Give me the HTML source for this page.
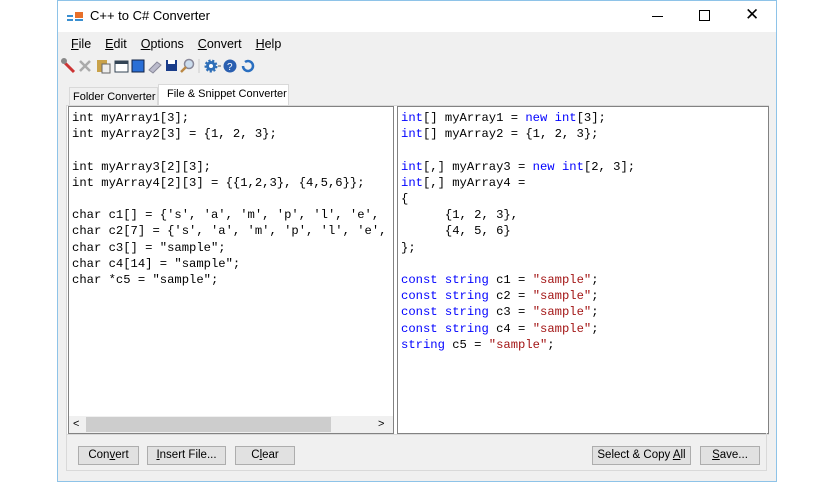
<!DOCTYPE html>
<html><head><style>
body{margin:0;width:836px;height:484px;background:#fff;position:relative;overflow:hidden;font-family:"Liberation Sans",sans-serif;}
.win{position:absolute;left:57px;top:0;width:720px;height:482px;background:#f0f0f0;border:1px solid #8ec3e8;box-sizing:border-box;}
.title{position:absolute;left:0;top:0;width:100%;height:31px;background:#fff;}
.title span{position:absolute;left:32px;top:7px;font-size:13px;color:#000;}
.menu{position:absolute;left:13px;top:36px;font-size:12.5px;}
.menu span{margin-right:14px;}
.pane{position:absolute;top:105px;background:#fff;border:1px solid #828282;box-sizing:border-box;font-family:"Liberation Mono",monospace;font-size:12.2px;line-height:16.2px;white-space:pre;padding:3px 0 0 3px;overflow:hidden;}
.k{color:#0000ff}.s{color:#a31515}
.btn{position:absolute;top:445px;height:19px;background:#e1e1e1;border:1px solid #adadad;box-sizing:border-box;font-size:11.5px;text-align:center;line-height:17px;white-space:nowrap;}
.tab{position:absolute;font-size:11px;box-sizing:border-box;white-space:nowrap;}
</style></head><body>
<div class="win">
<div class="title">
<svg style="position:absolute;left:9px;top:11px" width="16" height="10"><rect x="0" y="3" width="6" height="2" fill="#3a8fd0"/><rect x="0" y="7" width="6" height="2" fill="#3a8fd0"/><rect x="8" y="0" width="8" height="6" fill="#e8702a"/><rect x="8" y="7" width="8" height="2" fill="#3a8fd0"/></svg>
<span>C++ to C# Converter</span>
<div style="position:absolute;left:594px;top:15px;width:11px;height:1px;background:#000"></div>
<div style="position:absolute;left:641px;top:9px;width:9px;height:9px;border:1px solid #000"></div>
<div style="position:absolute;left:687px;top:4px;font-size:17px">✕</div>
</div>
<div class="menu"><span><u>F</u>ile</span><span><u>E</u>dit</span><span><u>O</u>ptions</span><span><u>C</u>onvert</span><span><u>H</u>elp</span></div>
<svg style="position:absolute;left:2px;top:56px" width="230" height="18">
<path d="M2 3 l6 6 l6 6" stroke="#c33" stroke-width="3"/><circle cx="4" cy="4" r="3" fill="#888"/>
<path d="M20 4 l10 10 M30 4 l-10 10" stroke="#aaa" stroke-width="2.5"/>
<rect x="37" y="3" width="10" height="12" fill="#c9a24a"/><rect x="42" y="7" width="8" height="9" fill="#eee" stroke="#666"/>
<rect x="55" y="4" width="13" height="11" fill="#fff" stroke="#345"/><rect x="55" y="4" width="13" height="3" fill="#345"/>
<rect x="72" y="3" width="12" height="12" fill="#2a6fd6" stroke="#124"/>
<path d="M89 13 l8 -8 l4 3 l-8 8 z" fill="#bbc" stroke="#889"/>
<rect x="106" y="3" width="11" height="11" fill="#1a3d8a"/><rect x="108" y="3" width="7" height="4" fill="#fff"/>
<circle cx="129" cy="7" r="4.5" fill="#cde" stroke="#889" stroke-width="1.5"/><path d="M126 10 l-5 5" stroke="#b84" stroke-width="2.5"/>
<line x1="139" y1="2" x2="139" y2="16" stroke="#ccc"/>
<circle cx="151" cy="9" r="5" fill="#2f6fb8" stroke="#2f6fb8" stroke-width="3" stroke-dasharray="2 1.5"/><circle cx="151" cy="9" r="2" fill="#fff"/><path d="M158 9 h3" stroke="#555"/>
<circle cx="170" cy="9" r="6.5" fill="#2a5fb0"/><text x="167" y="13" font-size="10" fill="#fff" font-family="Liberation Sans">?</text>
<path d="M185 5 a5 5 0 1 1 -2 4" stroke="#2a6fc0" stroke-width="2.5" fill="none"/>
</svg>
<div class="tab" style="left:11px;top:86px;width:89px;height:18px;border:1px solid #d9d9d9;border-bottom:none;padding:3px 0 0 3px">Folder Converter</div>
<div class="tab" style="left:100px;top:83px;width:131px;height:22px;background:#fff;border:1px solid #d9d9d9;border-bottom:none;padding:3px 0 0 8px">File &amp; Snippet Converter</div>
<div style="position:absolute;left:8px;top:104px;width:701px;height:328px;border:1px solid #d9d9d9;background:#fff"></div>
<div class="pane" style="left:10px;width:326px;height:328px;">int myArray1[3];
int myArray2[3] = {1, 2, 3};

int myArray3[2][3];
int myArray4[2][3] = {{1,2,3}, {4,5,6}};

char c1[] = {'s', 'a', 'm', 'p', 'l', 'e',
char c2[7] = {'s', 'a', 'm', 'p', 'l', 'e',
char c3[] = "sample";
char c4[14] = "sample";
char *c5 = "sample";
<div style="position:absolute;left:0;bottom:0;width:324px;height:17px;background:#f0f0f0;font-family:'Liberation Sans';font-size:11px;"><span style="position:absolute;left:4px;top:0">&lt;</span><div style="position:absolute;left:17px;top:1px;width:245px;height:15px;background:#cdcdcd"></div><span style="position:absolute;left:309px;top:0">&gt;</span></div></div>
<div class="pane" style="left:339px;width:372px;height:328px;"><span class="k">int</span>[] myArray1 = <span class="k">new</span> <span class="k">int</span>[3];
<span class="k">int</span>[] myArray2 = {1, 2, 3};

<span class="k">int</span>[,] myArray3 = <span class="k">new</span> <span class="k">int</span>[2, 3];
<span class="k">int</span>[,] myArray4 =
{
      {1, 2, 3},
      {4, 5, 6}
};

<span class="k">const</span> <span class="k">string</span> c1 = <span class="s">"sample"</span>;
<span class="k">const</span> <span class="k">string</span> c2 = <span class="s">"sample"</span>;
<span class="k">const</span> <span class="k">string</span> c3 = <span class="s">"sample"</span>;
<span class="k">const</span> <span class="k">string</span> c4 = <span class="s">"sample"</span>;
<span class="k">string</span> c5 = <span class="s">"sample"</span>;</div>
<div style="position:absolute;left:8px;top:432px;width:701px;height:38px;border:1px solid #d9d9d9;border-top:none;box-sizing:border-box"></div>
<div class="btn" style="left:20px;width:61px">Con<u>v</u>ert</div>
<div class="btn" style="left:89px;width:79px"><u>I</u>nsert File...</div>
<div class="btn" style="left:177px;width:60px">C<u>l</u>ear</div>
<div class="btn" style="left:534px;width:99px">Select &amp; Copy <u>A</u>ll</div>
<div class="btn" style="left:642px;width:60px"><u>S</u>ave...</div>
</div>
</body></html>
